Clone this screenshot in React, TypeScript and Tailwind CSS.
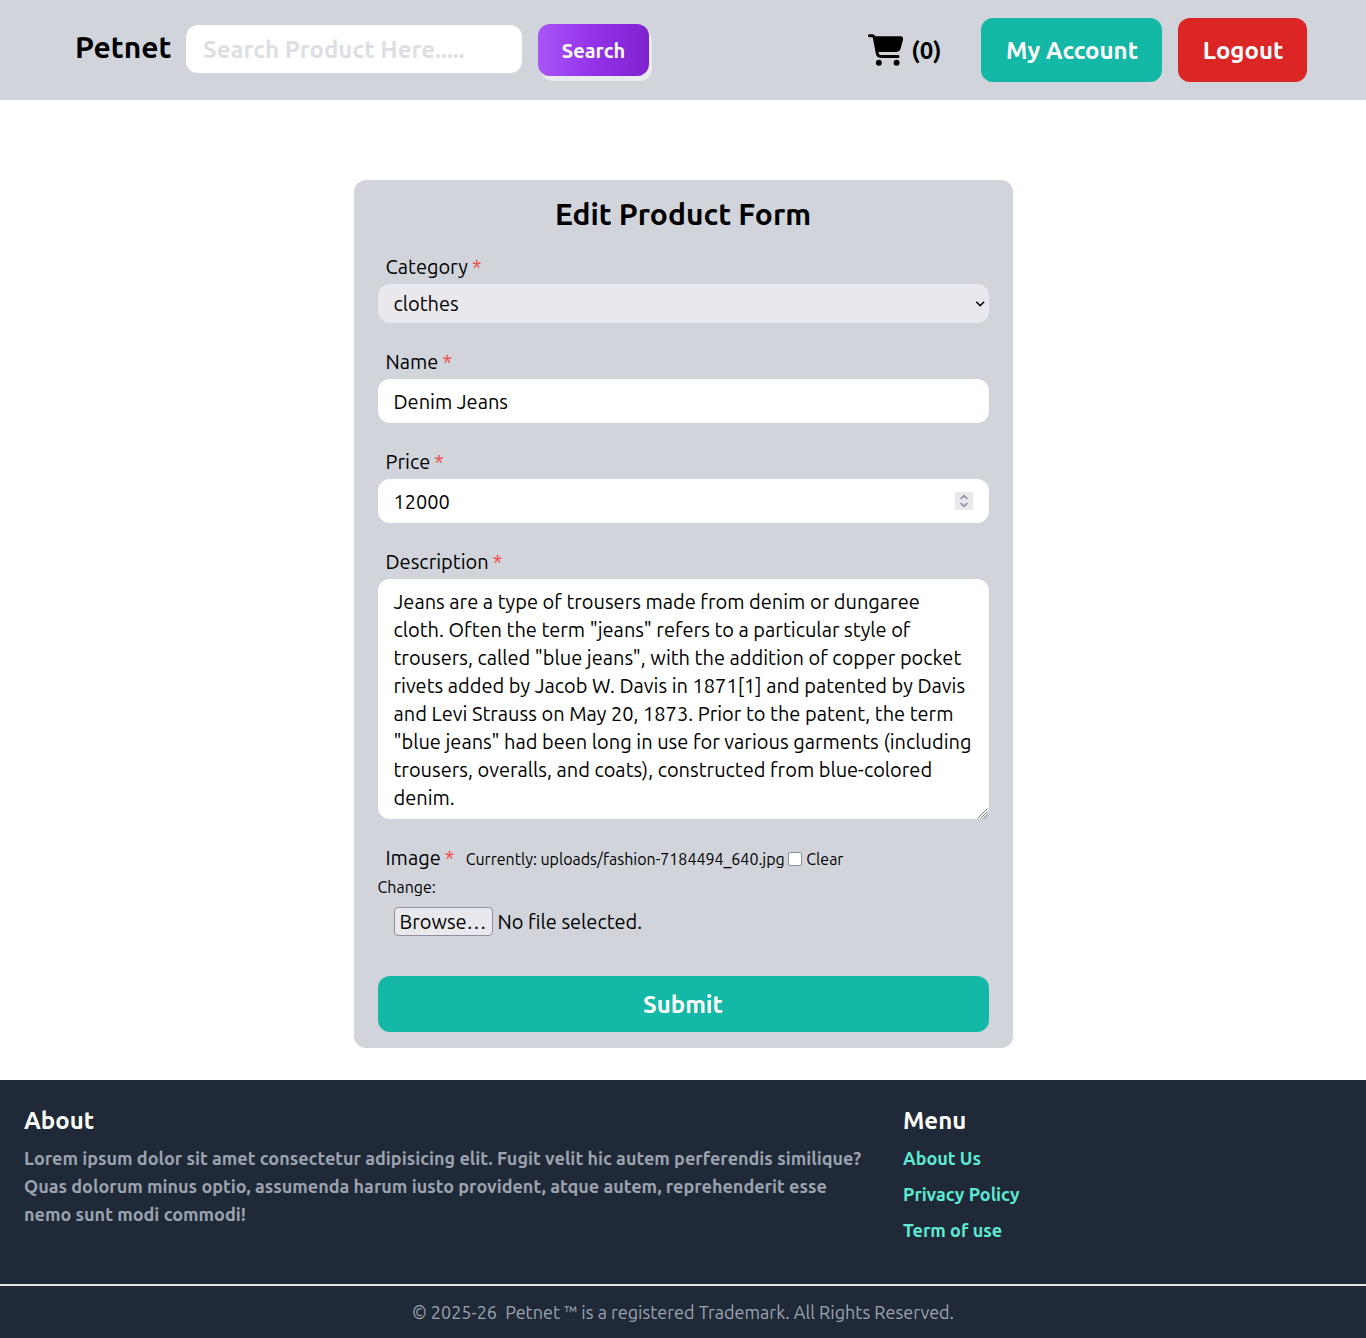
import type { ReactNode } from "react";
import { FaCartShopping } from "react-icons/fa6";

function Label({ children }: { children: ReactNode }) {
  return (
    <label className="block px-2 text-xl leading-7">
      {children} <span className="-ml-[0.5px] text-[#ef4444]">*</span>
    </label>
  );
}

export default function App() {
  return (
    <div className="bg-white font-['Ubuntu','Noto_Sans',sans-serif] text-black">
      <header className="flex h-[100px] items-center bg-[#d1d5db] pr-[59px] pl-[75px] font-semibold">
        <a className="-mt-1.5 w-[111px] text-3xl leading-9">Petnet</a>
        <input
          placeholder="Search Product Here....."
          className="-mt-0.5 h-12 w-[336px] rounded-xl bg-white pr-4 pl-[17px] text-2xl placeholder:text-[#dcdfe4]"
        />
        <button className="ml-4 h-[52px] w-[111px] rounded-xl bg-linear-to-r/srgb from-[#a855f7] via-[#9333ea] to-[#7e22ce] pt-0.5 text-xl text-white shadow-[3px_5px_0_#e9ebee]">
          Search
        </button>
        <div className="ml-auto flex items-center">
          <FaCartShopping className="mr-2 h-8 w-[35.5px]" />
          <span className="mr-[39.5px] pt-px text-2xl">(0)</span>
          <button className="mr-4 h-16 w-[181px] rounded-xl bg-[#14b8a6] pt-px pl-px text-2xl text-white">My Account</button>
          <button className="h-16 w-[129px] rounded-xl bg-[#dc2626] pt-px pl-px text-2xl text-white">Logout</button>
        </div>
      </header>

      <main className="pt-20 pb-8">
        <form className="mx-auto h-[868px] w-[659px] rounded-xl bg-[#d1d5db] px-6 pt-4">
          <h1 className="text-center text-3xl leading-9 font-semibold">Edit Product Form</h1>
          <div className="mt-[21px]">
            <Label>Category</Label>
            <div className="mt-[3px] flex h-[39px] items-center justify-between rounded-xl bg-[#e9e9ed] pr-1 pl-4 text-xl">
              clothes
              <svg className="h-[10px] w-[10px]" viewBox="0 0 10 10" fill="none" stroke="black" strokeWidth="1.6">
                <path d="M1.3 2.8l3.9 3.9 3.9-3.9" />
              </svg>
            </div>
          </div>
          <div className="mt-[25px]">
            <Label>Name</Label>
            <input defaultValue="Denim Jeans" className="mt-[3px] block h-11 w-full rounded-xl bg-white px-4 text-xl" />
          </div>
          <div className="mt-[25px]">
            <Label>Price</Label>
            <div className="mt-[3px] flex h-11 items-center justify-between rounded-xl bg-white px-4 text-xl">
              <span className="pt-px">12000</span>
              <svg className="h-[18px] w-[18px] bg-[#e9e9ed]" viewBox="0 0 18 18" fill="none" stroke="#8f8f9d" strokeWidth="1.6">
                <path d="M5.6 6.8L9 3.6l3.4 3.2M5.6 11.2l3.4 3.2 3.4-3.2" />
              </svg>
            </div>
          </div>
          <div className="mt-[25px]">
            <Label>Description</Label>
            <div className="relative mt-[3px]">
              <textarea
                className="block h-60 w-full resize-none overflow-hidden rounded-xl bg-white px-4 pt-[9px] text-xl leading-7"
                defaultValue={'Jeans are a type of trousers made from denim or dungaree cloth. Often the term "jeans" refers to a particular style of trousers, called "blue jeans", with the addition of copper pocket rivets added by Jacob W. Davis in 1871[1] and patented by Davis and Levi Strauss on May 20, 1873. Prior to the patent, the term "blue jeans" had been long in use for various garments (including trousers, overalls, and coats), constructed from blue-colored denim.'}
              />
              <svg className="absolute right-px bottom-0 h-[11px] w-[11px]" viewBox="0 0 11 11" stroke="#777" strokeWidth="1">
                <path d="M.5 10.5L10.5 .5M3.5 10.5L10.5 3.5M6.5 10.5L10.5 6.5M9.5 10.5l1-1" />
              </svg>
            </div>
          </div>
          <div className="mt-[25px] flex h-7 items-center">
            <Label>Image</Label>
            <span className="ml-[3.5px] pt-px leading-7">Currently: uploads/fashion-7184494_640.jpg</span>
            <span className="mt-px mr-[4.5px] ml-[3px] h-[14px] w-[14px] rounded-[2px] border border-[#8f8f9d] bg-white" />
            <span className="pt-px">Clear</span>
          </div>
          <div className="pt-px leading-7">Change:</div>
          <div className="mt-1.5 ml-4 flex items-center text-xl">
            <span className="mr-[5px] flex h-[29px] w-[99px] items-center justify-center rounded border border-[#8f8f9d] bg-[#e9e9ed]">
              Browse…
            </span>
            No file selected.
          </div>
          <button className="mt-10 h-14 w-full rounded-xl bg-[#14b8a6] pt-px text-2xl font-semibold text-white">Submit</button>
        </form>
      </main>

      <footer className="h-[258px] bg-[#1f2937]">
        <div className="flex h-[204px] px-6 pt-6 font-semibold">
          <section className="w-[879px]">
            <h2 className="pt-px text-2xl leading-8 text-white">About</h2>
            <p className="mt-[7px] w-[845px] text-lg leading-7 tracking-[0.01px] text-[#9ca3af]">
              Lorem ipsum dolor sit amet consectetur adipisicing elit. Fugit velit hic autem perferendis similique?
              Quas dolorum minus optio, assumenda harum iusto provident, atque autem, reprehenderit esse nemo sunt modi commodi!
            </p>
          </section>
          <section>
            <h2 className="pt-px text-2xl leading-8 text-white">Menu</h2>
            <ul className="mt-[7px] flex flex-col gap-2 text-lg leading-7 text-[#5eead4]">
              <li>About Us</li>
              <li>Privacy Policy</li>
              <li>Term of use</li>
            </ul>
          </section>
        </div>
        <p className="border-t-2 border-[#e5e7eb] pt-3 text-center text-lg leading-7 whitespace-pre text-[#9ca3af]">
          © 2025-26{"  "}Petnet ™ is a registered Trademark. All Rights Reserved.
        </p>
      </footer>
    </div>
  );
}
